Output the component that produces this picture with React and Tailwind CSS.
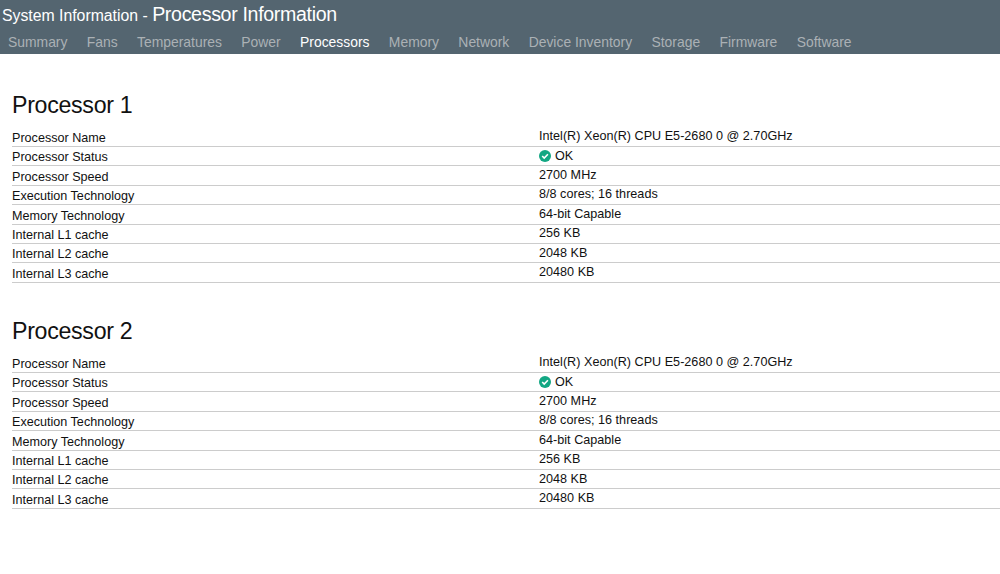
import React from 'react';

const tabs = [
  'Summary',
  'Fans',
  'Temperatures',
  'Power',
  'Processors',
  'Memory',
  'Network',
  'Device Inventory',
  'Storage',
  'Firmware',
  'Software',
];

const details = [
  { label: 'Processor Name', value: 'Intel(R) Xeon(R) CPU E5-2680 0 @ 2.70GHz' },
  { label: 'Processor Status', value: 'OK', status: true },
  { label: 'Processor Speed', value: '2700 MHz' },
  { label: 'Execution Technology', value: '8/8 cores; 16 threads' },
  { label: 'Memory Technology', value: '64-bit Capable' },
  { label: 'Internal L1 cache', value: '256 KB' },
  { label: 'Internal L2 cache', value: '2048 KB' },
  { label: 'Internal L3 cache', value: '20480 KB' },
];

const processors = [
  { id: 1, name: 'Processor 1', details },
  { id: 2, name: 'Processor 2', details },
];

const StatusIcon = () => (
  <svg className="h-3 w-3 shrink-0" viewBox="0 0 12 12" fill="none">
    <circle cx="6" cy="6" r="6" fill="#12a783" />
    <path d="M3.2 6 5.2 8 8.9 4.3" stroke="#fff" strokeWidth="1.6" />
  </svg>
);

const Header = ({ active }) => (
  <header className="h-[54px] bg-[#546570]">
    <h1 className="flex h-7 items-baseline pl-0.5 text-[15.8px] leading-7 whitespace-pre text-white">
      <span>System Information - </span>
      <span className="text-[19.6px] tracking-[-0.33px]">Processor Information</span>
    </h1>
    <nav className="flex gap-[19.35px] pl-2 text-[13.9px] leading-7 whitespace-nowrap">
      {tabs.map((tab) => (
        <a key={tab} className={tab === active ? 'text-white' : 'text-[#abb1b5]'}>
          {tab}
        </a>
      ))}
    </nav>
  </header>
);

const ProcessorSection = ({ name, details }) => (
  <section className="h-[226px] pl-3">
    <h2 className="h-9 text-[23.2px] leading-7 tracking-[-0.3px]">{name}</h2>
    <dl className="pt-[0.6px] text-[12.6px]">
      {details.map(({ label, value, status }) => (
        <div key={label} className="flex h-[19.4px] border-b border-[#cccccc]">
          <dt className="w-[527px] pt-[2.5px] leading-4">{label}</dt>
          <dd className="flex items-center gap-1 pb-px leading-4 tracking-[0.02px]">
            {status && <StatusIcon />}
            {value}
          </dd>
        </div>
      ))}
    </dl>
  </section>
);

const App = () => {
  return (
    <div className="h-[574px] overflow-hidden bg-white font-['Liberation_Sans',Arial,sans-serif] text-[#111111]">
      <Header active="Processors" />
      <main className="pt-[37px]">
        {processors.map((processor) => (
          <ProcessorSection key={processor.id} name={processor.name} details={processor.details} />
        ))}
      </main>
    </div>
  );
};

export default App;
